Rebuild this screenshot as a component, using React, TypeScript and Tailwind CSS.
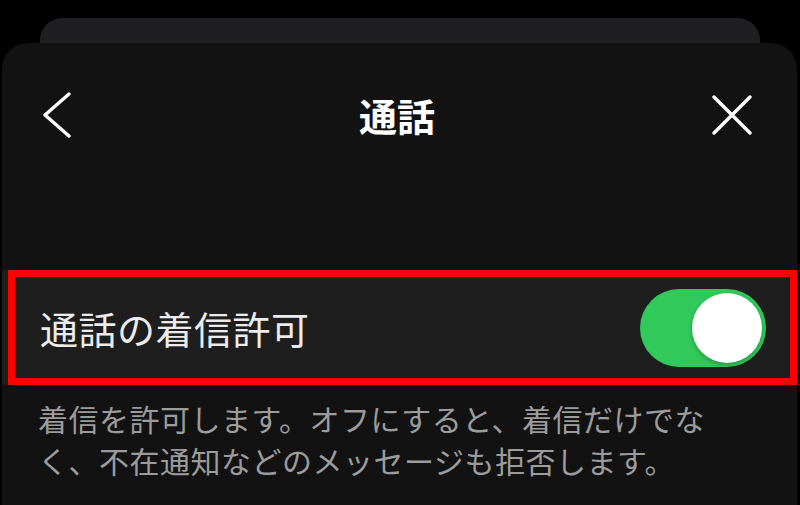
import { useState } from 'react'

export default function App() {
  const [enabled, setEnabled] = useState(true)

  return (
    <div
      className="w-[800px] h-[505px] bg-black overflow-hidden flex flex-col pt-[18px]"
      style={{ fontFamily: '"Noto Sans CJK JP", "Noto Sans", sans-serif' }}
    >
      {/* stacked sheet behind */}
      <div className="mx-[40px] h-[25px] shrink-0 bg-[#1f1f21] rounded-t-[22px]" />

      {/* front sheet */}
      <div className="flex-1 ml-[2px] mr-[3px] bg-[#121212] rounded-t-[26px] flex flex-col">
        <div className="h-[144px] shrink-0 grid grid-cols-[1fr_auto_1fr] items-center pl-[40px] pr-[45px]">
          <button className="w-[30px] h-[46px] flex items-center justify-center justify-self-start">
            <svg width="30" height="46" viewBox="0 0 30 46" fill="none">
              <path
                d="M27 2 L3 23 L27 44"
                stroke="#ffffff"
                strokeWidth="3.4"
                strokeLinecap="round"
                strokeLinejoin="round"
              />
            </svg>
          </button>
          <h1 className="text-[38px] leading-none font-bold text-white">通話</h1>
          <button className="w-[40px] h-[40px] flex items-center justify-center justify-self-end">
            <svg width="40" height="40" viewBox="0 0 40 40" fill="none">
              <path
                d="M2 2 L38 38 M38 2 L2 38"
                stroke="#ffffff"
                strokeWidth="3.4"
                strokeLinecap="round"
              />
            </svg>
          </button>
        </div>

        <div className="h-[83px] shrink-0" />

        <div className="relative h-[115px] shrink-0 bg-[#1e1e1e] flex items-center justify-between pl-[38px] pr-[31px]">
          <span className="text-[38px] leading-none text-[#ececec] tracking-[0.5px]">通話の着信許可</span>
          <button
            onClick={() => setEnabled(!enabled)}
            className={`w-[126px] h-[78px] rounded-full flex items-center px-[4px] ${
              enabled ? 'bg-[#30c95a] justify-end' : 'bg-[#3a3a3c] justify-start'
            }`}
          >
            <span className="w-[70px] h-[70px] rounded-full bg-white shadow-[0_2px_4px_rgba(0,0,0,0.25)]" />
          </button>
          {/* annotation frame */}
          <div className="absolute left-[6px] right-0 top-0 bottom-0 border-[7px] border-[#ff0000] pointer-events-none" />
        </div>

        <p className="pl-[36px] pt-[12px] text-[30px] leading-[42px] tracking-[0.5px] text-[#9c9c9c]">
          着信を許可します。オフにすると、着信だけでな
          <br />
          く、不在通知などのメッセージも拒否します。
        </p>
      </div>
    </div>
  )
}
